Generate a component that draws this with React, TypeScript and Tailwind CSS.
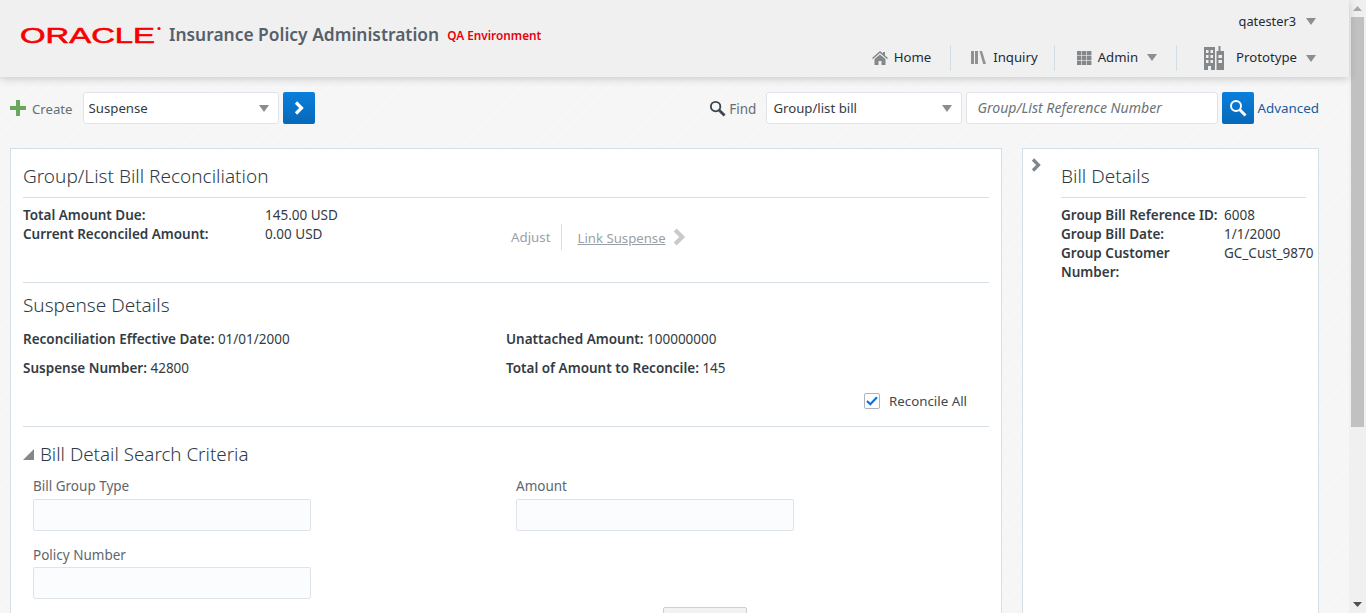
import React from 'react';

const FONT = "font-['Noto_Sans','Open_Sans',sans-serif]";
const HATCH =
  'bg-[repeating-linear-gradient(135deg,#f8f8f8_0px,#f8f8f8_1px,#f5f5f5_1px,#f5f5f5_3px)]';

function Caret({ className = '' }: { className?: string }) {
  return (
    <svg width="10" height="7" viewBox="0 0 10 7" className={className}>
      <path d="M0 0h10L5 7z" fill="#8b8d8f" />
    </svg>
  );
}

function Chevron({ color = '#fff', size = 14 }: { color?: string; size?: number }) {
  return (
    <svg width={size} height={size} viewBox="0 0 14 14">
      <path d="M4 1.500 9.500 7 4 12.500" fill="none" stroke={color} strokeWidth="3.200" />
    </svg>
  );
}

function SearchIcon({ color, size }: { color: string; size: number }) {
  return (
    <svg width={size} height={size} viewBox="0 0 18 18">
      <circle cx="7" cy="7" r="5" fill="none" stroke={color} strokeWidth="2" />
      <path d="M10.800 10.800 16.500 16.500" stroke={color} strokeWidth="3" />
    </svg>
  );
}

function HomeIcon() {
  return (
    <svg width="16" height="14" viewBox="0 0 16 14">
      <path d="M8 0 0 7l1 1 7-6 7 6 1-1-3-2.600V1h-2v1.600z" fill="#85888b" />
      <path d="M8 3.400 2.500 8v6H6.500V10h3v4h4V8z" fill="#85888b" />
    </svg>
  );
}

function InquiryIcon() {
  return (
    <svg width="15" height="13" viewBox="0 0 15 13">
      <rect x="0" y="0" width="3" height="13" fill="#8f9193" />
      <rect x="4" y="0" width="3" height="13" fill="#8f9193" />
      <path d="M8.500 0h2.500l4 13h-2.800z" fill="#8f9193" />
    </svg>
  );
}

function GridIcon() {
  return (
    <svg width="15" height="14" viewBox="0 0 15 14">
      {[0, 5, 10].map((x) =>
        [0, 5, 10].map((y) => (
          <rect key={`${x}-${y}`} x={x} y={y} width="4.400" height="4.400" fill="#85888b" />
        ))
      )}
    </svg>
  );
}

function BuildingIcon() {
  return (
    <svg width="20" height="24" viewBox="0 0 20 24">
      <path
        fillRule="evenodd"
        fill="#85888b"
        d="M0 1h11v23H7v-4H4v4H0zM2 4v3h2.500V4zm4.500 0v3H9V4zM2 9v3h2.500V9zm4.500 0v3H9V9zM2 14v3h2.500v-3zm4.500 0v3H9v-3z"
      />
      <path
        fillRule="evenodd"
        fill="#85888b"
        d="M14.500 0h2v5H20v19h-7.500V5h2zM14.500 9v3h3.500V9zm0 5v3h3.500v-3z"
      />
    </svg>
  );
}

function NavItem({ icon, label, caret }: { icon: React.ReactNode; label: string; caret?: boolean }) {
  return (
    <div className="flex items-center">
      {icon}
      <span className="text-[13.200px] text-[#1f2a35]">{label}</span>
      {caret && <Caret className="ml-[9px]" />}
    </div>
  );
}

function Header() {
  return (
    <header className="h-[77px] shrink-0 bg-[#f0f0f0] shadow-[0_2px_8px_rgba(0,0,0,0.18)] relative z-10 flex justify-between pl-[20px] pr-[33px]">
      <div className="flex items-center h-[70px] pb-[1px]">
        <svg width="142" height="28" viewBox="0 0 142 28">
          <text
            x="0"
            y="22"
            textLength="135"
            lengthAdjust="spacingAndGlyphs"
            fontFamily="'Liberation Sans', sans-serif"
            fontSize="22.500"
            fill="#f80000"
            stroke="#f80000"
            strokeWidth="0.600"
          >
            ORACLE
          </text>
          <circle cx="139" cy="7.500" r="1.600" fill="#f80000" />
        </svg>
        <span className="ml-[7px] text-[17.400px] font-semibold text-[#56606b]">
          Insurance Policy Administration
        </span>
        <span className="ml-[8px] mt-[3px] text-[11.800px] font-semibold text-[#e8000d]">QA Environment</span>
      </div>
      <div className="flex flex-col items-end">
        <div className="flex items-center h-[19px] mt-[12px]">
          <span className="text-[12.800px] text-[#1f2a35]">qatester3</span>
          <Caret className="ml-[10px]" />
        </div>
        <nav className="flex items-center h-[26px] mt-[14px]">
          <NavItem icon={<span className="mr-[6px]"><HomeIcon /></span>} label="Home" />
          <div className="w-px h-[26px] bg-[#d3dfe6] ml-[19px] mr-[20px]" />
          <NavItem icon={<span className="mr-[7px]"><InquiryIcon /></span>} label="Inquiry" />
          <div className="w-px h-[26px] bg-[#d3dfe6] ml-[16px] mr-[22px]" />
          <NavItem icon={<span className="mr-[6px]"><GridIcon /></span>} label="Admin" caret />
          <div className="w-px h-[26px] bg-[#d3dfe6] ml-[19px] mr-[27px]" />
          <NavItem icon={<span className="mr-[12px]"><BuildingIcon /></span>} label="Prototype" caret />
        </nav>
      </div>
    </header>
  );
}

function SelectBox({ value, width, padding }: { value: string; width: string; padding: string }) {
  return (
    <div className={`${width} ${padding} h-[32px] bg-white border border-[#dfe4ea] rounded-[3px] flex items-center justify-between pr-[9px]`}>
      <span className="mt-[1px] text-[13.200px] text-[#333b44]">{value}</span>
      <Caret />
    </div>
  );
}

function Toolbar() {
  return (
    <div className="flex justify-between items-center mt-[15px] pl-[10px] pr-[30px]">
      <div className="flex items-center">
        <svg width="16" height="16" viewBox="0 0 16 16">
          <path d="M6 0h4v6h6v4h-6v6H6v-6H0V6h6z" fill="#67a85c" />
        </svg>
        <span className="ml-[6px] mt-[3px] text-[13.200px] text-[#666d75]">Create</span>
        <div className="ml-[10px]">
          <SelectBox value="Suspense" width="w-[196px]" padding="pl-[5px]" />
        </div>
        <button className="ml-[4px] w-[32px] h-[32px] rounded-[2px] bg-gradient-to-b from-[#0a7fdd] to-[#0668b8] flex items-center justify-center">
          <Chevron />
        </button>
      </div>
      <div className="flex items-center">
        <SearchIcon color="#3d4650" size={17} />
        <span className="ml-[3px] mt-[3px] text-[13.500px] text-[#666d75]">Find</span>
        <div className="ml-[10px]">
          <SelectBox value="Group/list bill" width="w-[196px]" padding="pl-[6px]" />
        </div>
        <div className="ml-[4px] w-[252px] h-[32px] bg-white border border-[#dfe4ea] rounded-[3px] flex items-center pl-[10px]">
          <span className="mt-[-1px] text-[14.100px] italic text-[#6c737b]">Group/List Reference Number</span>
        </div>
        <button className="ml-[4px] w-[32px] h-[32px] rounded-[2px] bg-gradient-to-b from-[#0a7fdd] to-[#0668b8] flex items-center justify-center">
          <SearchIcon color="#fff" size={18} />
        </button>
        <a className="ml-[3px] text-[13.400px] text-[#145c9e]">Advanced</a>
      </div>
    </div>
  );
}

function FormField({ label, className = '', inputGap = 'mt-[3px]' }: { label: string; className?: string; inputGap?: string }) {
  return (
    <div className={className}>
      <div className="text-[13.500px] leading-[19px] text-[#5f666e]">{label}</div>
      <div className={`${inputGap} w-[278px] h-[32px] bg-[#fbfcfe] border border-[#dfe4ea] rounded-[2px]`} />
    </div>
  );
}

function MainCard() {
  return (
    <section className="w-[992px] h-[520px] bg-white border border-[#d3e0e8] px-[12px] shrink-0">
      <h2 className="h-[49px] pt-[13px] text-[19px] leading-[28px] font-light text-[#2f3a45] border-b border-[#d6dfe5]">
        Group/List Bill Reconciliation
      </h2>
      <div className="h-[85px] border-b border-[#d6dfe5] flex pt-[8px] text-[13.500px] leading-[19px] text-[#333b44]">
        <div className="w-[242px] font-semibold">
          <div>Total Amount Due:</div>
          <div>Current Reconciled Amount:</div>
        </div>
        <div className="w-[246px]">
          <div>145.00 USD</div>
          <div>0.00 USD</div>
        </div>
        <div className="flex items-start mt-[18px] text-[#9a9fa5]">
          <span className="leading-[26px] text-[13.300px]">Adjust</span>
          <div className="w-px h-[26px] bg-[#d3dfe6] mx-[10px]" />
          <span className="ml-[6px] underline leading-[28px] text-[13.200px]">Link Suspense</span>
          <span className="ml-[4px] mt-[4px]"><Chevron color="#c8cacc" size={18} /></span>
        </div>
      </div>
      <div className="h-[144px] border-b border-[#d6dfe5]">
        <h2 className="pt-[8px] text-[19px] leading-[28px] font-light text-[#2f3a45]">Suspense Details</h2>
        <div className="mt-[11px] grid grid-cols-[483px_1fr] gap-y-[10px] text-[13.500px] leading-[19px] text-[#333b44]">
          <div><b className="font-semibold">Reconciliation Effective Date:</b> 01/01/2000</div>
          <div><b className="font-semibold">Unattached Amount:</b> 100000000</div>
          <div><b className="font-semibold">Suspense Number:</b> 42800</div>
          <div><b className="font-semibold">Total of Amount to Reconcile:</b> 145</div>
        </div>
        <div className="flex justify-end items-center mt-[13px] pr-[22px]">
          <span className="w-[16px] h-[16px] bg-white border border-[#a9b4bd] rounded-[2px] flex items-center justify-center">
            <svg width="12" height="10" viewBox="0 0 12 10">
              <path d="M1 5 4.300 8.200 11 1.300" fill="none" stroke="#0a74cf" strokeWidth="2.200" />
            </svg>
          </span>
          <span className="ml-[9px] mt-[1px] text-[13.300px] text-[#3f4750]">Reconcile All</span>
        </div>
      </div>
      <div className="flex items-center mt-[13px] h-[28px]">
        <svg width="11" height="11" viewBox="0 0 11 11">
          <path d="M11 0v11H0z" fill="#85888b" />
        </svg>
        <h2 className="ml-[6px] text-[18.800px] leading-[28px] font-light text-[#2f3a45]">Bill Detail Search Criteria</h2>
      </div>
      <div className="mt-[9px] pl-[10px] grid grid-cols-[483px_1fr]">
        <FormField label="Bill Group Type" />
        <FormField label="Amount" />
        <FormField label="Policy Number" className="mt-[15px]" inputGap="mt-[2px]" />
      </div>
      <div className="mt-[8px] ml-[640px] w-[84px] h-[32px] bg-[#f0f2f3] border border-[#c9d0d6] rounded-[2px]" />
    </section>
  );
}

function DetailsCard() {
  return (
    <aside className="w-[297px] h-[520px] bg-white border border-[#d3e0e8] relative pl-[38px] pr-[6px] shrink-0">
      <span className="absolute left-[6px] top-[9px]"><Chevron color="#7e858b" /></span>
      <h2 className="h-[49px] pt-[13px] text-[19px] leading-[28px] font-light text-[#2f3a45] border-b border-[#d6dfe5] w-[245px]">
        Bill Details
      </h2>
      <div className="mt-[8px] grid grid-cols-[163px_1fr] text-[13.500px] leading-[19px] text-[#333b44]">
        <div className="font-semibold">Group Bill Reference ID:</div>
        <div>6008</div>
        <div className="font-semibold">Group Bill Date:</div>
        <div>1/1/2000</div>
        <div className="font-semibold">Group Customer<br />Number:</div>
        <div>GC_Cust_9870</div>
      </div>
    </aside>
  );
}

function FakeScrollbar() {
  return (
    <div className="w-[17px] h-full bg-[#f0f0f0] flex flex-col items-center shrink-0">
      <svg width="9" height="5" viewBox="0 0 9 5" className="mt-[6px]">
        <path d="M4.500 0 9 5H0z" fill="#a8a8a8" />
      </svg>
      <div className="w-[13px] h-[410px] mt-[6px] bg-[#c1c1c1]" />
      <div className="flex-1" />
      <svg width="9" height="5" viewBox="0 0 9 5" className="mb-[6px]">
        <path d="M0 0h9L4.500 5z" fill="#505050" />
      </svg>
    </div>
  );
}

export default function App() {
  return (
    <div className={`${FONT} w-[1366px] h-[613px] overflow-hidden flex`}>
      <div className={`w-[1349px] h-full flex flex-col ${HATCH}`}>
        <Header />
        <Toolbar />
        <div className="flex mt-[24px] pl-[10px] gap-[20px]">
          <MainCard />
          <DetailsCard />
        </div>
      </div>
      <FakeScrollbar />
    </div>
  );
}
